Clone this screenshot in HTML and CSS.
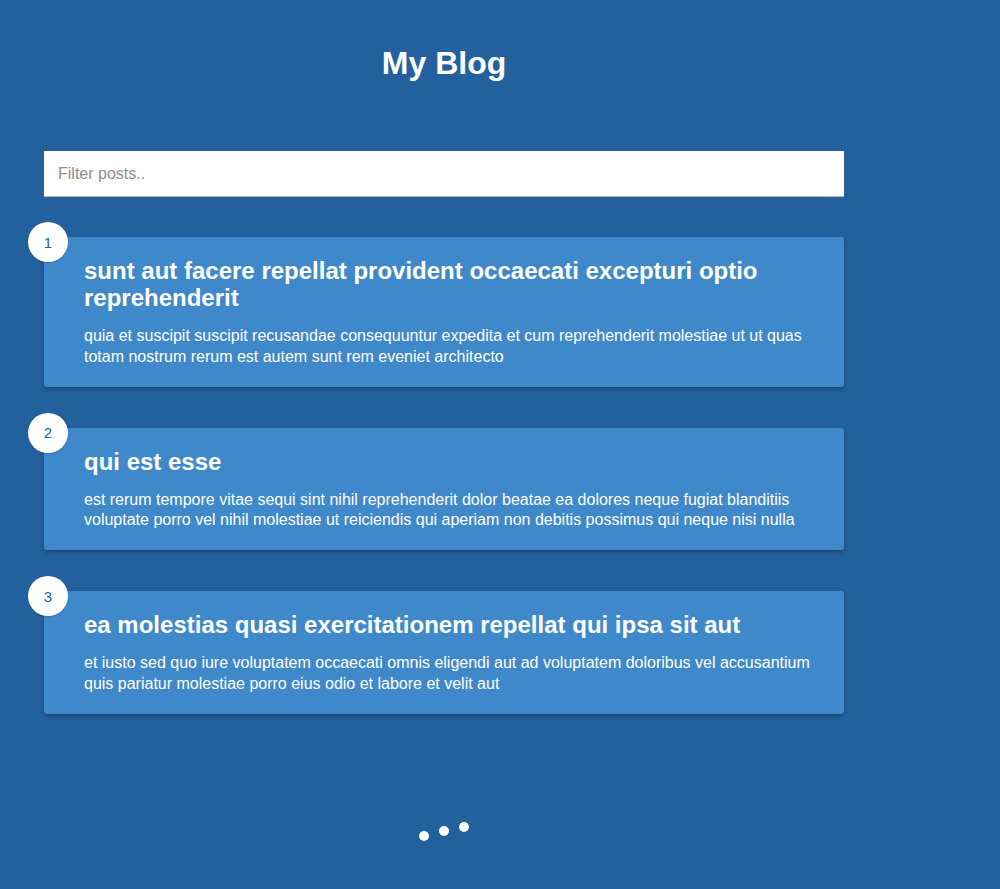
FILE: index.html
```html
<!DOCTYPE html>
<html lang="en">
<head>
<meta charset="UTF-8">
<title>My Blog</title>
<link rel="stylesheet" href="styles.css">
</head>
<body>
  <main class="container">
    <h1 class="title">My Blog</h1>
    <div class="filter-container">
      <input type="text" class="filter" placeholder="Filter posts..">
    </div>
    <div class="posts">
      <article class="post">
        <div class="number">1</div>
        <div class="post-info">
          <h2 class="post-title">sunt aut facere repellat provident occaecati excepturi optio reprehenderit</h2>
          <p class="post-body">quia et suscipit suscipit recusandae consequuntur expedita et cum reprehenderit molestiae ut ut quas totam nostrum rerum est autem sunt rem eveniet architecto</p>
        </div>
      </article>
      <article class="post">
        <div class="number">2</div>
        <div class="post-info">
          <h2 class="post-title">qui est esse</h2>
          <p class="post-body">est rerum tempore vitae sequi sint nihil reprehenderit dolor beatae ea dolores neque fugiat blanditiis voluptate porro vel nihil molestiae ut reiciendis qui aperiam non debitis possimus qui neque nisi nulla</p>
        </div>
      </article>
      <article class="post">
        <div class="number">3</div>
        <div class="post-info">
          <h2 class="post-title">ea molestias quasi exercitationem repellat qui ipsa sit aut</h2>
          <p class="post-body">et iusto sed quo iure voluptatem occaecati omnis eligendi aut ad voluptatem doloribus vel accusantium quis pariatur molestiae porro eius odio et labore et velit aut</p>
        </div>
      </article>
    </div>
    <div class="loader">
      <div class="circle c1"></div>
      <div class="circle c2"></div>
      <div class="circle c3"></div>
    </div>
  </main>
</body>
</html>
```

FILE: styles.css
```css
* {
  box-sizing: border-box;
}

html, body {
  margin: 0;
  padding: 0;
}

body {
  background-color: #23619e;
  color: #fff;
  font-family: "Liberation Sans", Arial, Helvetica, sans-serif;
  min-height: 889px;
}

.container {
  width: 800px;
  margin-left: 44px;
  display: flex;
  flex-direction: column;
}

.title {
  margin: 45px 0 0;
  font-size: 32px;
  line-height: 37px;
  font-weight: 700;
  text-align: center;
}

.filter-container {
  margin-top: 69px;
}

.filter {
  display: block;
  width: 100%;
  height: 46px;
  padding: 12px 14px;
  font-size: 16px;
  font-family: "Liberation Sans", Arial, Helvetica, sans-serif;
  color: #333;
  background: #fff;
  border: none;
  border-bottom: 1px solid #b9b9b9;
  outline: none;
}

.filter::placeholder {
  color: #8e8e8e;
}

.posts {
  display: flex;
  flex-direction: column;
  gap: 41px;
  margin-top: 40px;
}

.post {
  position: relative;
  display: flex;
  background-color: #3f89ca;
  box-shadow: 0 2px 4px rgba(0, 0, 0, 0.3);
  border-radius: 3px;
  padding: 20px 20px 19px;
}

.post-info {
  margin-left: 20px;
}

.post-title {
  margin: 0;
  font-size: 24px;
  line-height: 27px;
  font-weight: 700;
}

.post-body {
  margin: 15px 0 0;
  font-size: 16px;
  line-height: 20.8px;
}

.number {
  position: absolute;
  top: -15px;
  left: -16px;
  width: 40px;
  height: 40px;
  border-radius: 50%;
  background: #fff;
  color: #23619e;
  font-size: 15px;
  display: flex;
  align-items: center;
  justify-content: center;
  box-shadow: 0 1px 2px rgba(0, 0, 0, 0.15);
}

.loader {
  display: flex;
  justify-content: center;
  margin-top: 112px;
}

.circle {
  width: 10px;
  height: 10px;
  border-radius: 50%;
  background-color: #fff;
  margin: 5px;
}

.c2 {
  transform: translateY(-5px);
}

.c3 {
  transform: translateY(-9px);
}
```
